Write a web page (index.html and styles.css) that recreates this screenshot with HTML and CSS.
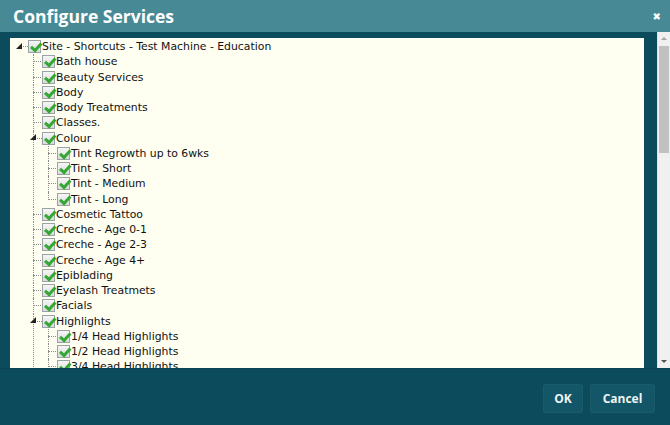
FILE: index.html
```html
<!DOCTYPE html>
<html>
<head>
<meta charset="utf-8">
<link rel="stylesheet" href="styles.css">
</head>
<body>
<div class="dialog">
  <div class="titlebar">
    <span class="title">Configure Services</span>
    <span class="close">&#x2716;</span>
  </div>
  <div class="main">
    <div class="panel">
      <ul class="tree root">
        <li>
          <div class="row"><span class="lead"><svg class="exp" width="6" height="6" viewBox="0 0 6 6"><path d="M6 0V6H0Z" fill="#222"/></svg><span class="dash short"></span></span><span class="cb"></span><span class="label">Site - Shortcuts - Test Machine - Education</span></div>
          <ul class="tree l1">
            <li><div class="row"><span class="lead"><span class="dash"></span></span><span class="cb"></span><span class="label">Bath house</span></div></li>
            <li><div class="row"><span class="lead"><span class="dash"></span></span><span class="cb"></span><span class="label">Beauty Services</span></div></li>
            <li><div class="row"><span class="lead"><span class="dash"></span></span><span class="cb"></span><span class="label">Body</span></div></li>
            <li><div class="row"><span class="lead"><span class="dash"></span></span><span class="cb"></span><span class="label">Body Treatments</span></div></li>
            <li><div class="row"><span class="lead"><span class="dash"></span></span><span class="cb"></span><span class="label">Classes.</span></div></li>
            <li>
              <div class="row"><span class="lead"><svg class="exp" width="6" height="6" viewBox="0 0 6 6"><path d="M6 0V6H0Z" fill="#222"/></svg><span class="dash short"></span></span><span class="cb"></span><span class="label">Colour</span></div>
              <ul class="tree l2">
                <li><div class="row"><span class="lead"><span class="dash"></span></span><span class="cb"></span><span class="label">Tint Regrowth up to 6wks</span></div></li>
                <li><div class="row"><span class="lead"><span class="dash"></span></span><span class="cb"></span><span class="label">Tint - Short</span></div></li>
                <li><div class="row"><span class="lead"><span class="dash"></span></span><span class="cb"></span><span class="label">Tint - Medium</span></div></li>
                <li class="last"><div class="row"><span class="lead"><span class="dash"></span></span><span class="cb"></span><span class="label">Tint - Long</span></div></li>
              </ul>
            </li>
            <li><div class="row"><span class="lead"><span class="dash"></span></span><span class="cb"></span><span class="label">Cosmetic Tattoo</span></div></li>
            <li><div class="row"><span class="lead"><span class="dash"></span></span><span class="cb"></span><span class="label">Creche - Age 0-1</span></div></li>
            <li><div class="row"><span class="lead"><span class="dash"></span></span><span class="cb"></span><span class="label">Creche - Age 2-3</span></div></li>
            <li><div class="row"><span class="lead"><span class="dash"></span></span><span class="cb"></span><span class="label">Creche - Age 4+</span></div></li>
            <li><div class="row"><span class="lead"><span class="dash"></span></span><span class="cb"></span><span class="label">Epiblading</span></div></li>
            <li><div class="row"><span class="lead"><span class="dash"></span></span><span class="cb"></span><span class="label">Eyelash Treatmets</span></div></li>
            <li><div class="row"><span class="lead"><span class="dash"></span></span><span class="cb"></span><span class="label">Facials</span></div></li>
            <li>
              <div class="row"><span class="lead"><svg class="exp" width="6" height="6" viewBox="0 0 6 6"><path d="M6 0V6H0Z" fill="#222"/></svg><span class="dash short"></span></span><span class="cb"></span><span class="label">Highlights</span></div>
              <ul class="tree l2">
                <li><div class="row"><span class="lead"><span class="dash"></span></span><span class="cb"></span><span class="label">1/4 Head Highlights</span></div></li>
                <li><div class="row"><span class="lead"><span class="dash"></span></span><span class="cb"></span><span class="label">1/2 Head Highlights</span></div></li>
                <li><div class="row"><span class="lead"><span class="dash"></span></span><span class="cb"></span><span class="label">3/4 Head Highlights</span></div></li>
              </ul>
            </li>
          </ul>
        </li>
      </ul>
    </div>
    <div class="scrollbar">
      <div class="arrow up"></div>
      <div class="thumb"></div>
      <div class="track"></div>
      <div class="arrow down"></div>
    </div>
  </div>
  <div class="footer">
    <button class="btn ok">OK</button>
    <button class="btn cancel">Cancel</button>
  </div>
</div>
</body>
</html>
```
FILE: styles.css
```css
* { box-sizing: border-box; }
html, body { margin: 0; padding: 0; }
body {
  width: 670px;
  height: 425px;
  overflow: hidden;
  background: #0c4b5c;
}
.dialog {
  width: 670px;
  height: 425px;
  display: flex;
  flex-direction: column;
}
.titlebar {
  height: 32px;
  flex: none;
  background: #478a96;
  display: flex;
  align-items: center;
  justify-content: space-between;
  padding: 0 9px 0 13px;
  color: #ffffff;
  font-family: "Open Sans", "Liberation Sans", sans-serif;
}
.title {
  font-size: 17.5px;
  font-weight: 700;
  letter-spacing: 0;
}
.close {
  font-size: 10px;
  font-weight: 700;
  font-family: "DejaVu Sans", sans-serif;
}
.main {
  display: flex;
  height: 336px;
  flex: none;
  padding-left: 10px;
}
.panel {
  margin-top: 6px;
  width: 634px;
  height: 330px;
  background: #fefef1;
  overflow: hidden;
  padding-top: 1px;
  font-family: "DejaVu Sans", sans-serif;
  font-size: 10.85px;
  color: #111;
}
.tree {
  list-style: none;
  margin: 0;
  padding: 0;
}
.tree li { position: relative; }
.tree.l1 { padding-left: 14px; }
.tree.l2 { padding-left: 15px; }
.l1 > li::before,
.l2 > li::before {
  content: "";
  position: absolute;
  left: 9px;
  top: 0;
  bottom: 0;
  border-left: 1px dotted #8a8a8a;
}
.l2 > li.last::before { bottom: auto; height: 8px; }
.row {
  display: flex;
  align-items: center;
  height: 15.25px;
  white-space: nowrap;
}
.lead {
  width: 18px;
  height: 100%;
  flex: none;
  display: flex;
  align-items: center;
  padding-left: 9px;
  position: relative;
}
.root > li > .row > .lead { padding-left: 6px; }
.dash {
  display: block;
  width: 8px;
  border-top: 1px dotted #8a8a8a;
}
.dash.short { width: 5px; margin-left: 1px; }
.exp { display: block; flex: none; margin-top: -2px; }
.l1 > li > .row > .lead .exp { margin-left: -3px; }
.cb {
  width: 13px;
  height: 13px;
  flex: none;
  border: 1px solid #9aa3a6;
  background: linear-gradient(#f6f6f6, #dadada);
  position: relative;
}
.cb::after {
  content: "";
  position: absolute;
  left: 1px;
  top: 1px;
  width: 8px;
  height: 4px;
  border-left: 3px solid #33a833;
  border-bottom: 3px solid #33a833;
  transform: rotate(-48deg) translate(0px, 1px);
}
.label { margin-left: 1px; }
.scrollbar {
  margin-left: 13px;
  width: 13px;
  height: 336px;
  background: #f0f0f0;
  display: flex;
  flex-direction: column;
  border-left: 1px solid #e2e2e2;
}
.arrow { height: 14px; flex: none; position: relative; }
.arrow::after {
  content: "";
  position: absolute;
  left: 3px;
  top: 5px;
  border-left: 3px solid transparent;
  border-right: 3px solid transparent;
}
.arrow.up::after { border-bottom: 3px solid #a3a3a3; }
.arrow.down::after { border-top: 3px solid #505050; top: 6px; }
.thumb {
  height: 107px;
  flex: none;
  margin: 0 1px;
  background: #c1c1c1;
}
.track { flex: 1; }
.footer {
  flex: 1;
  display: flex;
  justify-content: flex-end;
  align-items: flex-start;
  gap: 7px;
  padding: 15px 15px 0 0;
  border-top: 1px solid #0a4251;
}
.btn {
  height: 29px;
  border: 1px solid #1a5a69;
  background: #125667;
  color: #eef4f4;
  font-family: "Open Sans", "Liberation Sans", sans-serif;
  font-weight: 700;
  font-size: 12px;
  border-radius: 2px;
  padding: 0;
}
.btn.ok { width: 40px; }
.btn.cancel { width: 65px; }
```
